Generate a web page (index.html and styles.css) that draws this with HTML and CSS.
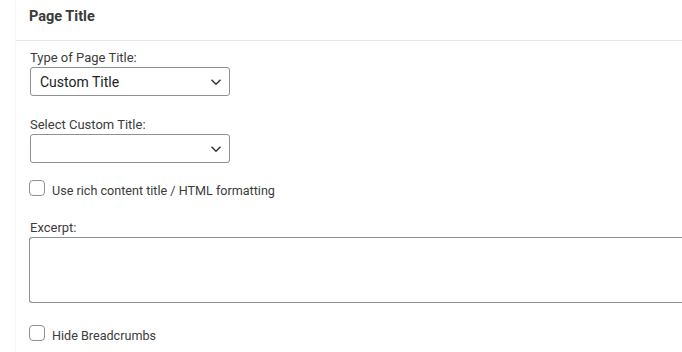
FILE: index.html
```html
<!DOCTYPE html>
<html lang="en">
<head>
  <meta charset="UTF-8">
  <title>Page Title</title>
  <link rel="stylesheet" href="styles.css">
</head>
<body>
  <div class="panel">
    <div class="panel-head">Page Title</div>
    <div class="panel-body">
      <div class="field">
        <label class="label">Type of Page Title:</label>
        <div class="select">
          <span>Custom Title</span>
          <svg width="12" height="8" viewBox="0 0 12 8"><path d="M1.5 1.8 6 6.2 10.5 1.8" fill="none" stroke="#333" stroke-width="1.5"/></svg>
        </div>
      </div>
      <div class="field field-next">
        <label class="label">Select Custom Title:</label>
        <div class="select">
          <span></span>
          <svg width="12" height="8" viewBox="0 0 12 8"><path d="M1.5 1.8 6 6.2 10.5 1.8" fill="none" stroke="#333" stroke-width="1.5"/></svg>
        </div>
      </div>
      <div class="check check-first">
        <span class="box"></span>
        <span class="check-text">Use rich content title / HTML formatting</span>
      </div>
      <div class="field field-excerpt">
        <label class="label">Excerpt:</label>
        <div class="textarea"></div>
      </div>
      <div class="check check-last">
        <span class="box"></span>
        <span class="check-text">Hide Breadcrumbs</span>
      </div>
    </div>
  </div>
</body>
</html>
```
FILE: styles.css
```css
body {
  margin: 0;
  font-family: Roboto, "Liberation Sans", sans-serif;
  color: #3c3c3c;
  background: #fff;
}

.panel {
  margin-left: 15px;
  border-left: 1px solid #f4f4f4;
  height: 352px;
}

.panel-head {
  height: 40px;
  line-height: 33px;
  padding-left: 13px;
  font-size: 14.5px;
  font-weight: bold;
  color: #3a3a3a;
  border-bottom: 1px solid #e6e6e6;
}

.panel-body {
  padding: 9px 0 0 14px;
}

.label {
  display: block;
  font-size: 13px;
  line-height: 16px;
  margin-bottom: 1px;
}

.field-next {
  margin-top: 21px;
}

.field-excerpt {
  margin-top: 24px;
}

.select {
  width: 182px;
  height: 27px;
  border: 1px solid #8c9196;
  border-radius: 3px;
  display: flex;
  align-items: center;
  justify-content: space-between;
  padding: 0 7px 0 9px;
  font-size: 14px;
  color: #222;
}

.check {
  display: flex;
  align-items: flex-start;
  gap: 7px;
  font-size: 12.6px;
  line-height: 16px;
  margin-left: -1px;
  height: 16px;
}

.check-text {
  padding-top: 3px;
}

.check-first {
  margin-top: 17px;
}

.check-last {
  margin-top: 22px;
}

.box {
  width: 14px;
  height: 14px;
  border: 1px solid #8c9196;
  border-radius: 4px;
}

.textarea {
  height: 64px;
  margin-left: -1px;
  border: 1px solid #8c9196;
  border-right: none;
  border-radius: 3px 0 0 3px;
}
```
